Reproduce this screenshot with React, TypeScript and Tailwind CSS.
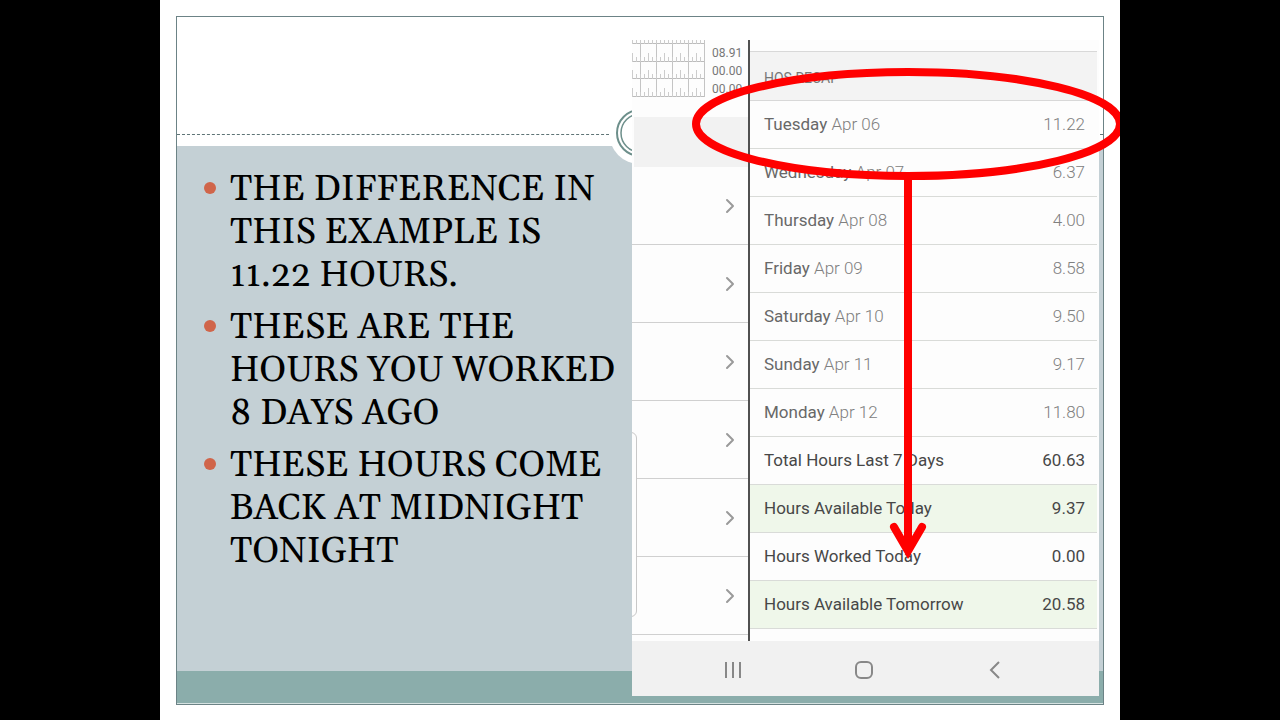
import { ChevronRight } from 'lucide-react';

interface RecapRow {
  label: string;
  date?: string;
  hours: string;
  highlight?: boolean;
}

const POINTS = [
  ['THE DIFFERENCE IN', 'THIS EXAMPLE IS', '11.22 HOURS.'],
  ['THESE ARE THE', 'HOURS YOU WORKED', '8 DAYS AGO'],
  ['THESE HOURS COME', 'BACK AT MIDNIGHT', 'TONIGHT'],
];

const RECAP: RecapRow[] = [
  { label: 'Tuesday', date: 'Apr 06', hours: '11.22' },
  { label: 'Wednesday', date: 'Apr 07', hours: '6.37' },
  { label: 'Thursday', date: 'Apr 08', hours: '4.00' },
  { label: 'Friday', date: 'Apr 09', hours: '8.58' },
  { label: 'Saturday', date: 'Apr 10', hours: '9.50' },
  { label: 'Sunday', date: 'Apr 11', hours: '9.17' },
  { label: 'Monday', date: 'Apr 12', hours: '11.80' },
  { label: 'Total Hours Last 7 Days', hours: '60.63' },
  { label: 'Hours Available Today', hours: '9.37', highlight: true },
  { label: 'Hours Worked Today', hours: '0.00' },
  { label: 'Hours Available Tomorrow', hours: '20.58', highlight: true },
];

const DUTY_TOTALS = ['08.91', '00.00', '00.00'];

const LOG_DAYS = [1, 2, 3, 4, 5, 6];

function LogGrid() {
  const ticks = Array.from({ length: 18 }, (_, i) => i * 4 + 1);

  return (
    <svg width="73" height="58" viewBox="0 0 73 58" fill="none" stroke="#cccccc" aria-hidden="true">
      {[4, 22, 39, 57].map((y) => (
        <path key={y} d={`M0 ${y - 0.5}H73`} stroke="#bcbcbc" />
      ))}
      {[8, 24, 40, 56, 72].map((x) => (
        <path key={x} d={`M${x + 0.5} 0V57`} stroke="#c4c4c4" />
      ))}
      {ticks.map((x) => (
        <path
          key={x}
          d={[4, 22, 39, 57].map((y) => `M${x - 0.5} ${y}v-${y === 4 ? 4 : x % 16 === 1 ? 9 : 5}`).join('')}
        />
      ))}
    </svg>
  );
}

function LogPane() {
  return (
    <div className="relative w-[116px] shrink-0 overflow-hidden bg-[#fdfdfd]">
      <div className="flex h-[77px] gap-[7px]">
        <LogGrid />
        <ul className="pt-1 text-[12px] leading-[18px] text-[#777777]">
          {DUTY_TOTALS.map((total, i) => (
            <li key={i}>{total}</li>
          ))}
        </ul>
      </div>
      <div className="ml-[2px] h-[50px] bg-[#f2f2f2]" />
      <ul>
        {LOG_DAYS.map((day) => (
          <li key={day} className="border-b border-[#d0d0d0]">
            <button type="button" aria-label={`Open log ${day}`} className="flex h-[77px] w-full items-center justify-end pr-[6px]">
              <ChevronRight className="h-6 w-6 text-[#9a9a9a]" strokeWidth={2} />
            </button>
          </li>
        ))}
      </ul>
      {/* edge of the card that has slid out to the left */}
      <div className="absolute -left-4 bottom-6 h-[185px] w-[21px] rounded-[6px] border border-[#c8c8c8] bg-[#fdfdfd]" />
    </div>
  );
}

function RecapTable() {
  return (
    <div className="flex-1 border-l-2 border-[#505050] bg-[#fdfdfd] pr-[2px] pt-[11px]">
      <table className="w-full border-separate border-spacing-0 text-[17px] leading-6">
        <thead>
          <tr>
            <th
              colSpan={2}
              scope="colgroup"
              className="h-[50px] border-y border-[#d8d8d8] bg-[#f3f3f3] p-0 pl-[14px] pt-1 text-left text-[14px] font-normal text-[#777777]"
            >
              HOS RECAP
            </th>
          </tr>
        </thead>
        <tbody>
          {RECAP.map((row) => (
            <tr key={row.label} className={row.highlight ? 'bg-[#eff7ea]' : ''}>
              <th
                scope="row"
                className={`h-12 border-b border-[#d9dbd8] p-0 pb-[2px] pl-[14px] text-left font-normal whitespace-nowrap ${
                  row.date ? 'text-[#686868]' : 'text-[#474747]'
                }`}
              >
                {row.label}
                {row.date && <span className="font-light text-[#808080]"> {row.date}</span>}
              </th>
              <td
                className={`border-b border-[#d9dbd8] p-0 pr-3 pb-[2px] text-right ${
                  row.date ? 'font-light text-[#808080]' : 'text-[#474747]'
                }`}
              >
                {row.hours}
              </td>
            </tr>
          ))}
        </tbody>
      </table>
    </div>
  );
}

function PhoneNav() {
  return (
    <nav className="grid h-[55px] grid-cols-[202px_60px_202px] items-center bg-[#f1f1f1] pt-[2px] text-[#888888]">
      <button type="button" aria-label="Recents" className="justify-self-center">
        <svg width="18" height="18" viewBox="0 0 18 18" stroke="currentColor" strokeWidth="2">
          <path d="M2 1v16M9 1v16M16 1v16" />
        </svg>
      </button>
      <button type="button" aria-label="Home" className="justify-self-center">
        <svg width="20" height="20" viewBox="0 0 20 20" fill="none" stroke="currentColor" strokeWidth="2">
          <rect x="2" y="2" width="16" height="16" rx="5" />
        </svg>
      </button>
      <button type="button" aria-label="Back" className="justify-self-center">
        <svg width="12" height="18" viewBox="0 0 12 18" fill="none" stroke="currentColor" strokeWidth="2">
          <path d="M10 1 2 9l8 8" />
        </svg>
      </button>
    </nav>
  );
}

// Red ellipse around the first row with an arrow down to the hours worked
function Markup() {
  return (
    <svg
      className="pointer-events-none absolute left-[60px] top-7"
      width="432"
      height="492"
      viewBox="0 0 432 492"
      fill="none"
      stroke="#ff0000"
      strokeWidth="8"
      aria-hidden="true"
    >
      <ellipse cx="216" cy="56" rx="212" ry="52" />
      <path d="M216 108V480" />
      <path d="M202 459 216 483 230 459" strokeLinecap="round" strokeLinejoin="miter" />
    </svg>
  );
}

function Seal() {
  return (
    <svg className="absolute left-1/2 top-[102px] -ml-[31px]" width="62" height="62" viewBox="0 0 62 62" fill="none" stroke="#6d8f8b" aria-hidden="true">
      <circle cx="31" cy="31" r="31" fill="#ffffff" stroke="none" />
      <circle cx="31" cy="31" r="23" strokeWidth="2" />
      <circle cx="31" cy="31" r="19" strokeWidth="1.5" />
    </svg>
  );
}

export default function App() {
  return (
    <div className="flex min-h-screen justify-center bg-black">
      <main className="relative w-3/4 overflow-hidden bg-white px-4 pt-4 pb-[15px]">
        <div className="flex h-full flex-col border border-[#6c8386]">
          <header className="h-[118px] border-b border-dashed border-[#5f7476]" />
          <section className="mt-[11px] flex-1 bg-[#c4d0d5] pt-[22px] pl-[27px]">
            <ul className="flex flex-col gap-[9px] font-['Georgia','Gelasio','Liberation_Serif',serif] text-[36px] leading-[43px] text-black">
              {POINTS.map((lines) => (
                <li key={lines[0]} className="flex gap-[14px]">
                  <span className="mt-[14px] h-3 w-3 shrink-0 rounded-full bg-[#d0654a]" />
                  <p>
                    {lines.map((line) => (
                      <span key={line} className="block whitespace-nowrap">
                        {line}
                      </span>
                    ))}
                  </p>
                </li>
              ))}
            </ul>
          </section>
          <footer className="h-[33px] border-b border-[#d5e2e1] bg-[#8badab]" />
        </div>

        <Seal />

        <div className="absolute right-[21px] top-10 w-[467px] font-['Roboto',sans-serif]">
          <div className="flex h-[601px] overflow-hidden">
            <LogPane />
            <RecapTable />
          </div>
          <PhoneNav />
          <Markup />
        </div>
      </main>
    </div>
  );
}
